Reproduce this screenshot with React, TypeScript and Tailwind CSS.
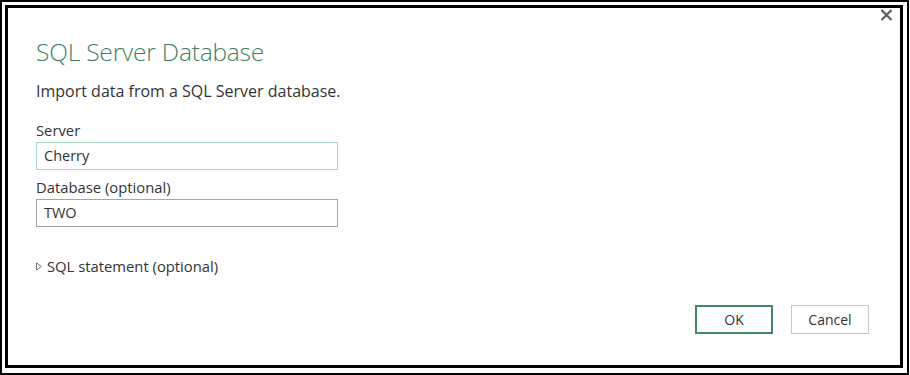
import React from 'react';

const font = { fontFamily: '"Open Sans", "Noto Sans", sans-serif' };

function Field({ label, value, focused }: { label: string; value: string; focused?: boolean }) {
  return (
    <div className="flex flex-col">
      <label className="text-[14.8px] leading-[18px] text-[#333]">{label}</label>
      <div
        className={`mt-[3px] h-[28px] w-[302px] border flex items-center pl-[7px] text-[14.5px] text-[#333] ${
          focused ? 'border-[#a9d6bf]' : 'border-[#a6a6a6]'
        }`}
      >
        {value}
      </div>
    </div>
  );
}

export default function App() {
  return (
    <div className="w-[910px] h-[375px] bg-white" style={font}>
      <div className="w-[909px] h-[375px] border-2 border-black pl-[3px] pr-[4px] pt-[3px] pb-[5px]">
        <div className="relative h-full border-[3px] border-black flex flex-col pl-[28px] pr-[31px]">
          {/* close */}
          <svg className="absolute right-[7px] top-[1px]" width="13" height="12" viewBox="0 0 13 12">
            <path d="M1.5 1L11.5 11M11.5 1L1.5 11" stroke="#5f5f5f" strokeWidth="2.2" />
          </svg>

          <h1 className="mt-[28px] text-[24.5px] leading-[32px] font-light text-[#3f7f62] tracking-[-0.2px]">
            SQL Server Database
          </h1>
          <p className="mt-[13px] text-[16px] leading-[20px] text-[#333]">
            Import data from a SQL Server database.
          </p>

          <div className="mt-[20px] flex flex-col gap-[8px]">
            <Field label="Server" value="Cherry" focused />
            <Field label="Database (optional)" value="TWO" />
          </div>

          <div className="mt-[30px] flex items-center gap-[5px] text-[14.8px] leading-[18px] text-[#333]">
            <svg width="6" height="9" viewBox="0 0 6 9">
              <path d="M0.5 0.8L5.2 4.5L0.5 8.2Z" fill="none" stroke="#777" strokeWidth="1" />
            </svg>
            <span>SQL statement (optional)</span>
          </div>

          <div className="mt-auto mb-[31px] flex justify-end gap-[18px]">
            <button className="w-[78px] h-[29px] border-2 border-[#3f8a62] text-[14px] text-[#333] bg-white">
              OK
            </button>
            <button className="w-[78px] h-[29px] border border-[#c6c6c6] text-[14px] text-[#333] bg-white">
              Cancel
            </button>
          </div>
        </div>
      </div>
    </div>
  );
}
